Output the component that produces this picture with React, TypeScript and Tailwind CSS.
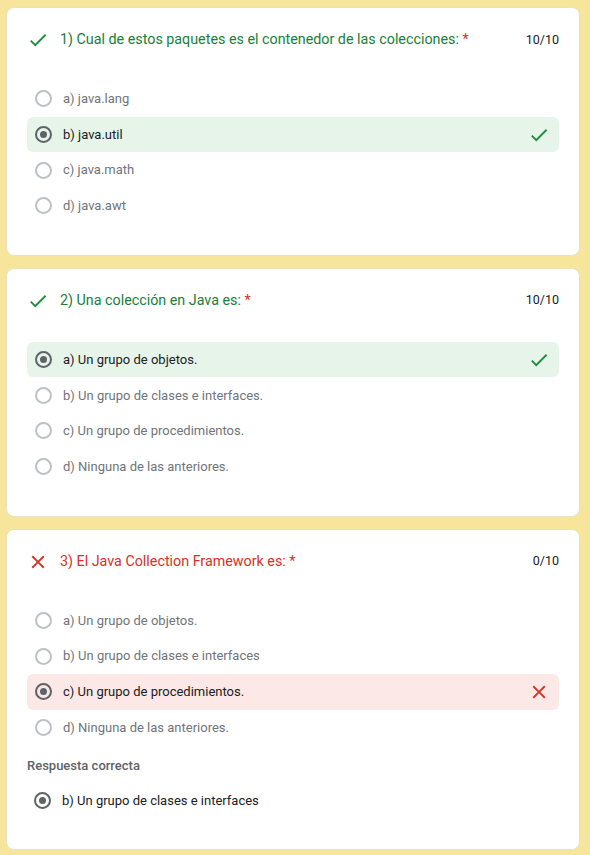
import React from "react";

type Opt = { label: string; selected?: boolean };

const CheckIcon = ({ className }: { className?: string }) => (
  <svg viewBox="0 0 24 24" className={className} fill="currentColor">
    <path d="M9 16.17L4.83 12l-1.42 1.41L9 19 21 7l-1.41-1.41z" />
  </svg>
);

const CloseIcon = ({ className }: { className?: string }) => (
  <svg viewBox="0 0 24 24" className={className} fill="currentColor">
    <path d="M19 6.41L17.59 5 12 10.59 6.41 5 5 6.41 10.59 12 5 17.59 6.41 19 12 13.41 17.59 19 19 17.59 13.41 12z" />
  </svg>
);

function Radio({ selected }: { selected?: boolean }) {
  return (
    <span
      className={`flex h-[17px] w-[17px] shrink-0 items-center justify-center rounded-full border-2 ${
        selected ? "border-[#5f6368]" : "border-[#bdc1c6]"
      }`}
    >
      {selected && <span className="h-[7px] w-[7px] rounded-full bg-[#5f6368]" />}
    </span>
  );
}

function OptionRow({
  label,
  selected,
  status,
}: {
  label: string;
  selected?: boolean;
  status?: "ok" | "bad";
}) {
  const bg = status === "ok" ? "bg-[#e6f4ea]" : status === "bad" ? "bg-[#fce8e6]" : "";
  return (
    <div className={`flex h-[35.7px] items-center rounded-md pl-[8px] pr-[9px] ${bg}`}>
      <Radio selected={selected} />
      <span
        className={`ml-[11px] flex-1 text-[13px] ${
          selected ? "text-[#202124]" : "text-[#70757a]"
        }`}
      >
        {label}
      </span>
      {status === "ok" && <CheckIcon className="h-[22px] w-[22px] text-[#1e8e3e]" />}
      {status === "bad" && <CloseIcon className="h-[22px] w-[22px] text-[#d93025]" />}
    </div>
  );
}

function Question({
  title,
  correct,
  score,
  options,
  picked,
  answer,
}: {
  title: string;
  correct: boolean;
  score: string;
  options: Opt[];
  picked: number;
  answer?: string;
}) {
  const color = correct ? "text-[#188038]" : "text-[#d93025]";
  return (
    <div className="rounded-lg border border-[#e8e2c4] bg-white px-[20px] pt-[20px] pb-[31px]">
      <div className="flex h-[24px] items-center">
        {correct ? (
          <CheckIcon className="h-[22px] w-[22px] text-[#1e8e3e]" />
        ) : (
          <CloseIcon className="h-[22px] w-[22px] text-[#d93025]" />
        )}
        <span className={`ml-[11px] flex-1 text-[14.3px] ${color}`}>
          {title} <span className="text-[#d93025]">*</span>
        </span>
        <span className="text-[12.5px] text-[#202124]">{score}</span>
      </div>
      <div className="mt-[29px] flex flex-col">
        {options.map((o, i) => (
          <OptionRow
            key={i}
            label={o.label}
            selected={i === picked}
            status={i === picked ? (correct ? "ok" : "bad") : undefined}
          />
        ))}
      </div>
      {answer && (
        <>
          <div className="mt-[11px] h-[20px] text-[13px] leading-[20px] font-medium text-[#5f6368]">
            Respuesta correcta
          </div>
          <div className="mt-[6px] flex h-[36px] items-center pl-[7px]">
            <Radio selected />
            <span className="ml-[11px] text-[13px] text-[#202124]">{answer}</span>
          </div>
        </>
      )}
    </div>
  );
}

export default function App() {
  return (
    <div
      className="min-h-[855px] bg-[#f7e59b] pt-[7px] pr-[10px] pb-[6px] pl-[6px]"
      style={{ fontFamily: "Roboto, 'Noto Sans', sans-serif" }}
    >
      <div className="flex flex-col gap-[12px]">
        <Question
          title="1) Cual de estos paquetes es el contenedor de las colecciones:"
          correct
          score="10/10"
          picked={1}
          options={[
            { label: "a) java.lang" },
            { label: "b) java.util" },
            { label: "c) java.math" },
            { label: "d) java.awt" },
          ]}
        />
        <Question
          title="2) Una colección en Java es:"
          correct
          score="10/10"
          picked={0}
          options={[
            { label: "a) Un grupo de objetos." },
            { label: "b) Un grupo de clases e interfaces." },
            { label: "c) Un grupo de procedimientos." },
            { label: "d) Ninguna de las anteriores." },
          ]}
        />
        <Question
          title="3) El Java Collection Framework es:"
          correct={false}
          score="0/10"
          picked={2}
          answer="b) Un grupo de clases e interfaces"
          options={[
            { label: "a) Un grupo de objetos." },
            { label: "b) Un grupo de clases e interfaces" },
            { label: "c) Un grupo de procedimientos." },
            { label: "d) Ninguna de las anteriores." },
          ]}
        />
      </div>
    </div>
  );
}
